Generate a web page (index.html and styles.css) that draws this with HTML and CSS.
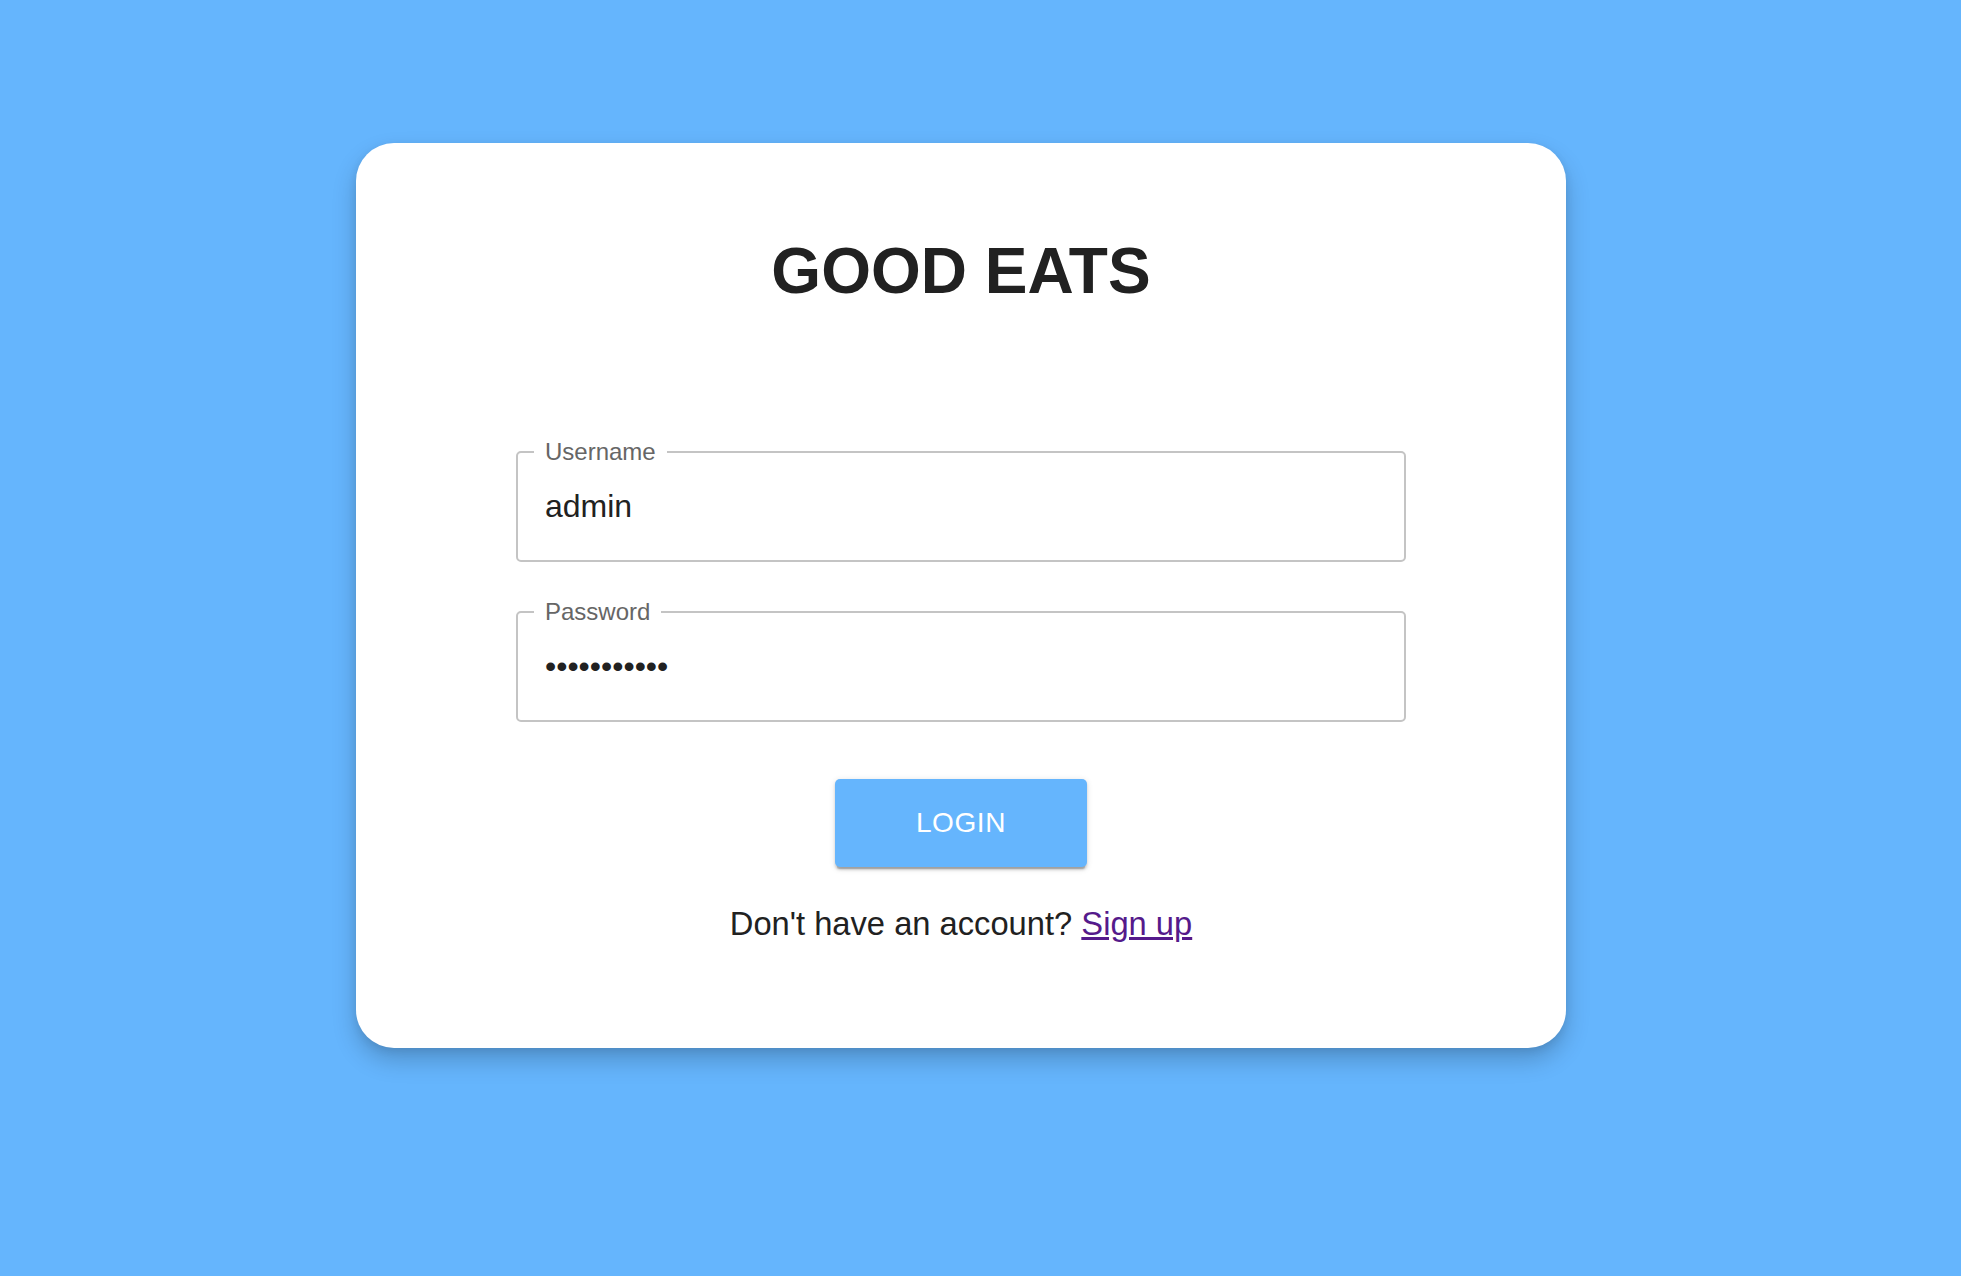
FILE: index.html
```html
<!DOCTYPE html>
<html lang="en">
<head>
<meta charset="utf-8">
<title>Good Eats - Login</title>
<link rel="stylesheet" href="styles.css">
</head>
<body>
<main class="page">
  <section class="card">
    <h1 class="title">GOOD EATS</h1>
    <form class="form">
      <fieldset class="field">
        <legend class="field-label">Username</legend>
        <input class="field-input" type="text" value="admin">
      </fieldset>
      <fieldset class="field field-password">
        <legend class="field-label">Password</legend>
        <input class="field-input" type="password" value="password123">
      </fieldset>
      <button class="login-btn" type="button">LOGIN</button>
      <p class="signup">Don't have an account? <a class="signup-link" href="#">Sign up</a></p>
    </form>
  </section>
</main>
</body>
</html>
```

FILE: styles.css
```css
* { box-sizing: border-box; }

html, body {
  margin: 0;
  padding: 0;
}

body {
  background: #65b5fd;
  min-height: 100vh;
  font-family: "Liberation Sans", Arial, sans-serif;
  color: #212121;
}

.page {
  display: flex;
  justify-content: center;
  align-items: flex-start;
  padding: 143px 39px 0 0;
  min-height: 100vh;
}

.card {
  width: 1210px;
  background: #ffffff;
  border-radius: 38px;
  padding: 91px 160px 100px;
  box-shadow: 0 12px 24px rgba(0, 0, 0, 0.2), 0 3px 8px rgba(0, 0, 0, 0.08);
}

.title {
  margin: 0 0 131px;
  font-size: 64px;
  line-height: 75px;
  font-weight: 700;
  text-align: center;
  color: #212121;
}

.form {
  display: flex;
  flex-direction: column;
  align-items: center;
}

.field {
  width: 100%;
  margin: 0;
  padding: 0 16px;
  min-inline-size: 0;
  border: 2px solid #c4c4c4;
  border-radius: 5px;
}

.field-password {
  margin-top: 38px;
}

.field-label {
  padding: 0 11px;
  font-size: 24px;
  line-height: 24px;
  color: #666666;
}

.field-input {
  display: block;
  width: 100%;
  height: 96px;
  margin: 0;
  padding: 0 11px 11px;
  border: none;
  outline: none;
  background: transparent;
  font-family: "Liberation Sans", Arial, sans-serif;
  font-size: 32px;
  color: #212121;
}

.field-password .field-input {
  padding-bottom: 12px;
}

.login-btn {
  margin-top: 57px;
  width: 252px;
  height: 88px;
  border: none;
  border-radius: 5px;
  background: #65b5fd;
  color: #ffffff;
  font-family: "Liberation Sans", Arial, sans-serif;
  font-size: 28px;
  letter-spacing: 0.6px;
  box-shadow: 0 4px 1px -2.5px rgba(0, 0, 0, 0.2), 0 2.5px 2.5px rgba(0, 0, 0, 0.14), 0 1.25px 6px rgba(0, 0, 0, 0.12);
  cursor: pointer;
}

.signup {
  margin: 33px 0 0;
  font-size: 32.7px;
  line-height: 48px;
  color: #212121;
  text-align: center;
}

.signup-link {
  color: #551a8b;
  text-decoration: underline;
}
```
